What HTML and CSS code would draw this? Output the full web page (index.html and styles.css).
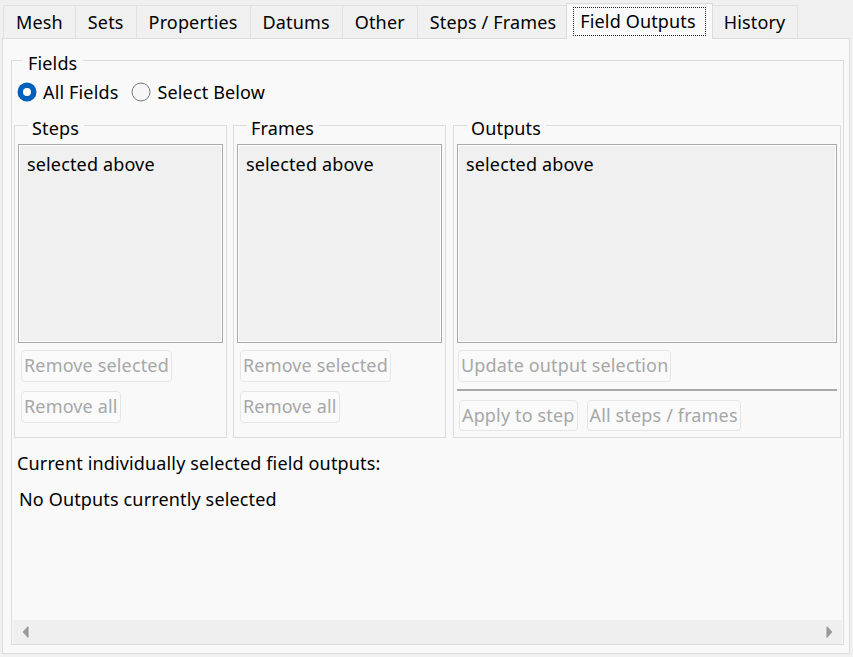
FILE: index.html
```html
<!DOCTYPE html>
<html>
<head>
<meta charset="utf-8">
<title>Field Outputs</title>
<link rel="stylesheet" href="styles.css">
</head>
<body>
<div class="window">
  <div class="tabs">
    <div class="tab">Mesh</div>
    <div class="tab">Sets</div>
    <div class="tab">Properties</div>
    <div class="tab">Datums</div>
    <div class="tab">Other</div>
    <div class="tab">Steps / Frames</div>
    <div class="tab active"><span class="focus">Field Outputs</span></div>
    <div class="tab">History</div>
  </div>
  <div class="panel">
    <fieldset class="fields">
      <legend>Fields</legend>
      <div class="radios">
        <label class="radio">
          <svg class="radio-icon" width="20" height="20" viewBox="0 0 20 20"><circle cx="10" cy="10" r="9.5" fill="#005fb8"/><circle cx="10" cy="10" r="4" fill="#ffffff"/></svg>
          <span>All Fields</span>
        </label>
        <label class="radio">
          <svg class="radio-icon" width="20" height="20" viewBox="0 0 20 20"><circle cx="10" cy="10" r="9" fill="#f7f7f7" stroke="#7a7a7a" stroke-width="1"/></svg>
          <span>Select Below</span>
        </label>
      </div>
      <div class="groups">
        <fieldset class="group">
          <legend>Steps</legend>
          <div class="listbox">selected above</div>
          <div class="btn-col">
            <button class="btn" disabled>Remove selected</button>
            <button class="btn" disabled>Remove all</button>
          </div>
        </fieldset>
        <fieldset class="group">
          <legend>Frames</legend>
          <div class="listbox">selected above</div>
          <div class="btn-col">
            <button class="btn" disabled>Remove selected</button>
            <button class="btn" disabled>Remove all</button>
          </div>
        </fieldset>
        <fieldset class="group outputs">
          <legend>Outputs</legend>
          <div class="listbox">selected above</div>
          <div class="btn-row update-row">
            <button class="btn" disabled>Update output selection</button>
          </div>
          <div class="separator"></div>
          <div class="btn-row apply-row">
            <button class="btn short" disabled>Apply to step</button>
            <button class="btn short" disabled>All steps / frames</button>
          </div>
        </fieldset>
      </div>
      <div class="scrollarea">
        <div class="scroll-content">
          <p class="current">Current individually selected field outputs:</p>
          <p class="none">No Outputs currently selected</p>
        </div>
        <div class="hscroll">
          <svg width="7" height="12" viewBox="0 0 7 12"><path d="M6 1 L1.5 6 L6 11 Z" fill="#9a9a9a" stroke="#9a9a9a" stroke-width="1.2" stroke-linejoin="round"/></svg>
          <svg width="7" height="12" viewBox="0 0 7 12"><path d="M1 1 L5.5 6 L1 11 Z" fill="#9a9a9a" stroke="#9a9a9a" stroke-width="1.2" stroke-linejoin="round"/></svg>
        </div>
      </div>
    </fieldset>
  </div>
</div>
</body>
</html>
```

FILE: styles.css
```css
* { box-sizing: border-box; }

html, body {
  margin: 0;
  padding: 0;
}

body {
  width: 853px;
  height: 657px;
  overflow: hidden;
  background: #f0f0f0;
  font-family: "Noto Sans", "Open Sans", sans-serif;
  font-size: 18px;
  letter-spacing: 0.15px;
  line-height: 24px;
  color: #000;
}

.window {
  padding: 3px 3px 0 2px;
}

/* Tabs */
.tabs {
  display: flex;
  align-items: flex-end;
  height: 35px;
  padding-left: 1px;
  position: relative;
  z-index: 1;
}

.tab {
  height: 33px;
  padding: 0 12px 0 12px;
  display: flex;
  align-items: center;
  background: #f0f0f0;
  border: 1px solid #e1e1e1;
  border-bottom: none;
  margin-right: -1px;
  color: #000;
  white-space: nowrap;
}

.tab.active {
  height: 36px;
  margin: 0 -2px -1px -2px;
  padding: 0 6px 1px 6px;
  background: #f9f9f9;
  border-color: #dadada;
  position: relative;
  z-index: 2;
}

.focus {
  display: block;
  height: 29px;
  line-height: 26px;
  padding: 0 9px 0 6px;
  border: 1px dotted #222;
}

/* Panel */
.panel {
  height: 616px;
  background: #f9f9f9;
  border: 1px solid #dcdcdc;
  padding: 9px 5px 8px 8px;
  display: flex;
  flex-direction: column;
}

fieldset {
  margin: 0;
  min-width: 0;
}

legend {
  line-height: 20px;
}

.fields {
  flex: 1;
  border: 1px solid #dcdcdc;
  padding: 0 1px;
  display: flex;
  flex-direction: column;
}

.fields > legend {
  margin-left: 9px;
  padding: 5px 6px 0 6px;
}

.radios {
  display: flex;
  align-items: center;
  height: 24px;
  margin-top: 7px;
  padding-left: 4px;
}

.radio {
  display: flex;
  align-items: center;
  gap: 6px;
  margin-right: 13px;
}

.radio-icon {
  display: block;
  flex: none;
}

/* Groups */
.groups {
  display: grid;
  grid-template-columns: 213px 213px 1fr;
  column-gap: 6px;
  margin: 9px 1px 0 1px;
}

.group {
  border: 1px solid #dcdcdc;
  padding: 6px 3px 6px 3px;
  display: flex;
  flex-direction: column;
}

.group > legend {
  margin-left: 10px;
  padding: 5px 5px 0 4px;
}

.outputs {
  margin-left: 1px;
}

.listbox {
  height: 199px;
  background: #f0f0f0;
  border: 1px solid #a9a9a9;
  box-shadow: inset 0 0 0 1px #ffffff;
  padding: 7px 8px 8px;
  white-space: nowrap;
}

.btn {
  font: inherit;
  letter-spacing: inherit;
  height: 32px;
  line-height: 24px;
  padding: 0 2px 2px 2px;
  color: #a7a7a7;
  background: #fafafa;
  border: 1px solid #e6e6e6;
  border-radius: 4px;
  white-space: nowrap;
}

.btn.short {
  height: 31px;
}

.btn-col {
  display: flex;
  flex-direction: column;
  align-items: flex-start;
  gap: 9px;
  margin-top: 7px;
  padding-left: 3px;
}

.btn-row {
  display: flex;
  gap: 9px;
}

.update-row {
  margin-top: 7px;
  padding-left: 1px;
}

.separator {
  height: 2px;
  margin-top: 7px;
  background: #a8a8a8;
}

.apply-row {
  margin-top: 9px;
  padding-left: 2px;
}

/* Lower scroll area */
.scrollarea {
  flex: 1;
  display: flex;
  flex-direction: column;
}

.scroll-content {
  flex: 1;
  padding-top: 13px;
}

.scroll-content p {
  margin: 0;
  white-space: nowrap;
}

.current {
  padding-left: 4px;
}

.none {
  margin-top: 12px !important;
  padding-left: 6px;
}

.hscroll {
  height: 24px;
  background: #efefef;
  display: flex;
  align-items: center;
  justify-content: space-between;
  padding: 0 9px 0 9px;
}

.hscroll svg {
  display: block;
}
```
